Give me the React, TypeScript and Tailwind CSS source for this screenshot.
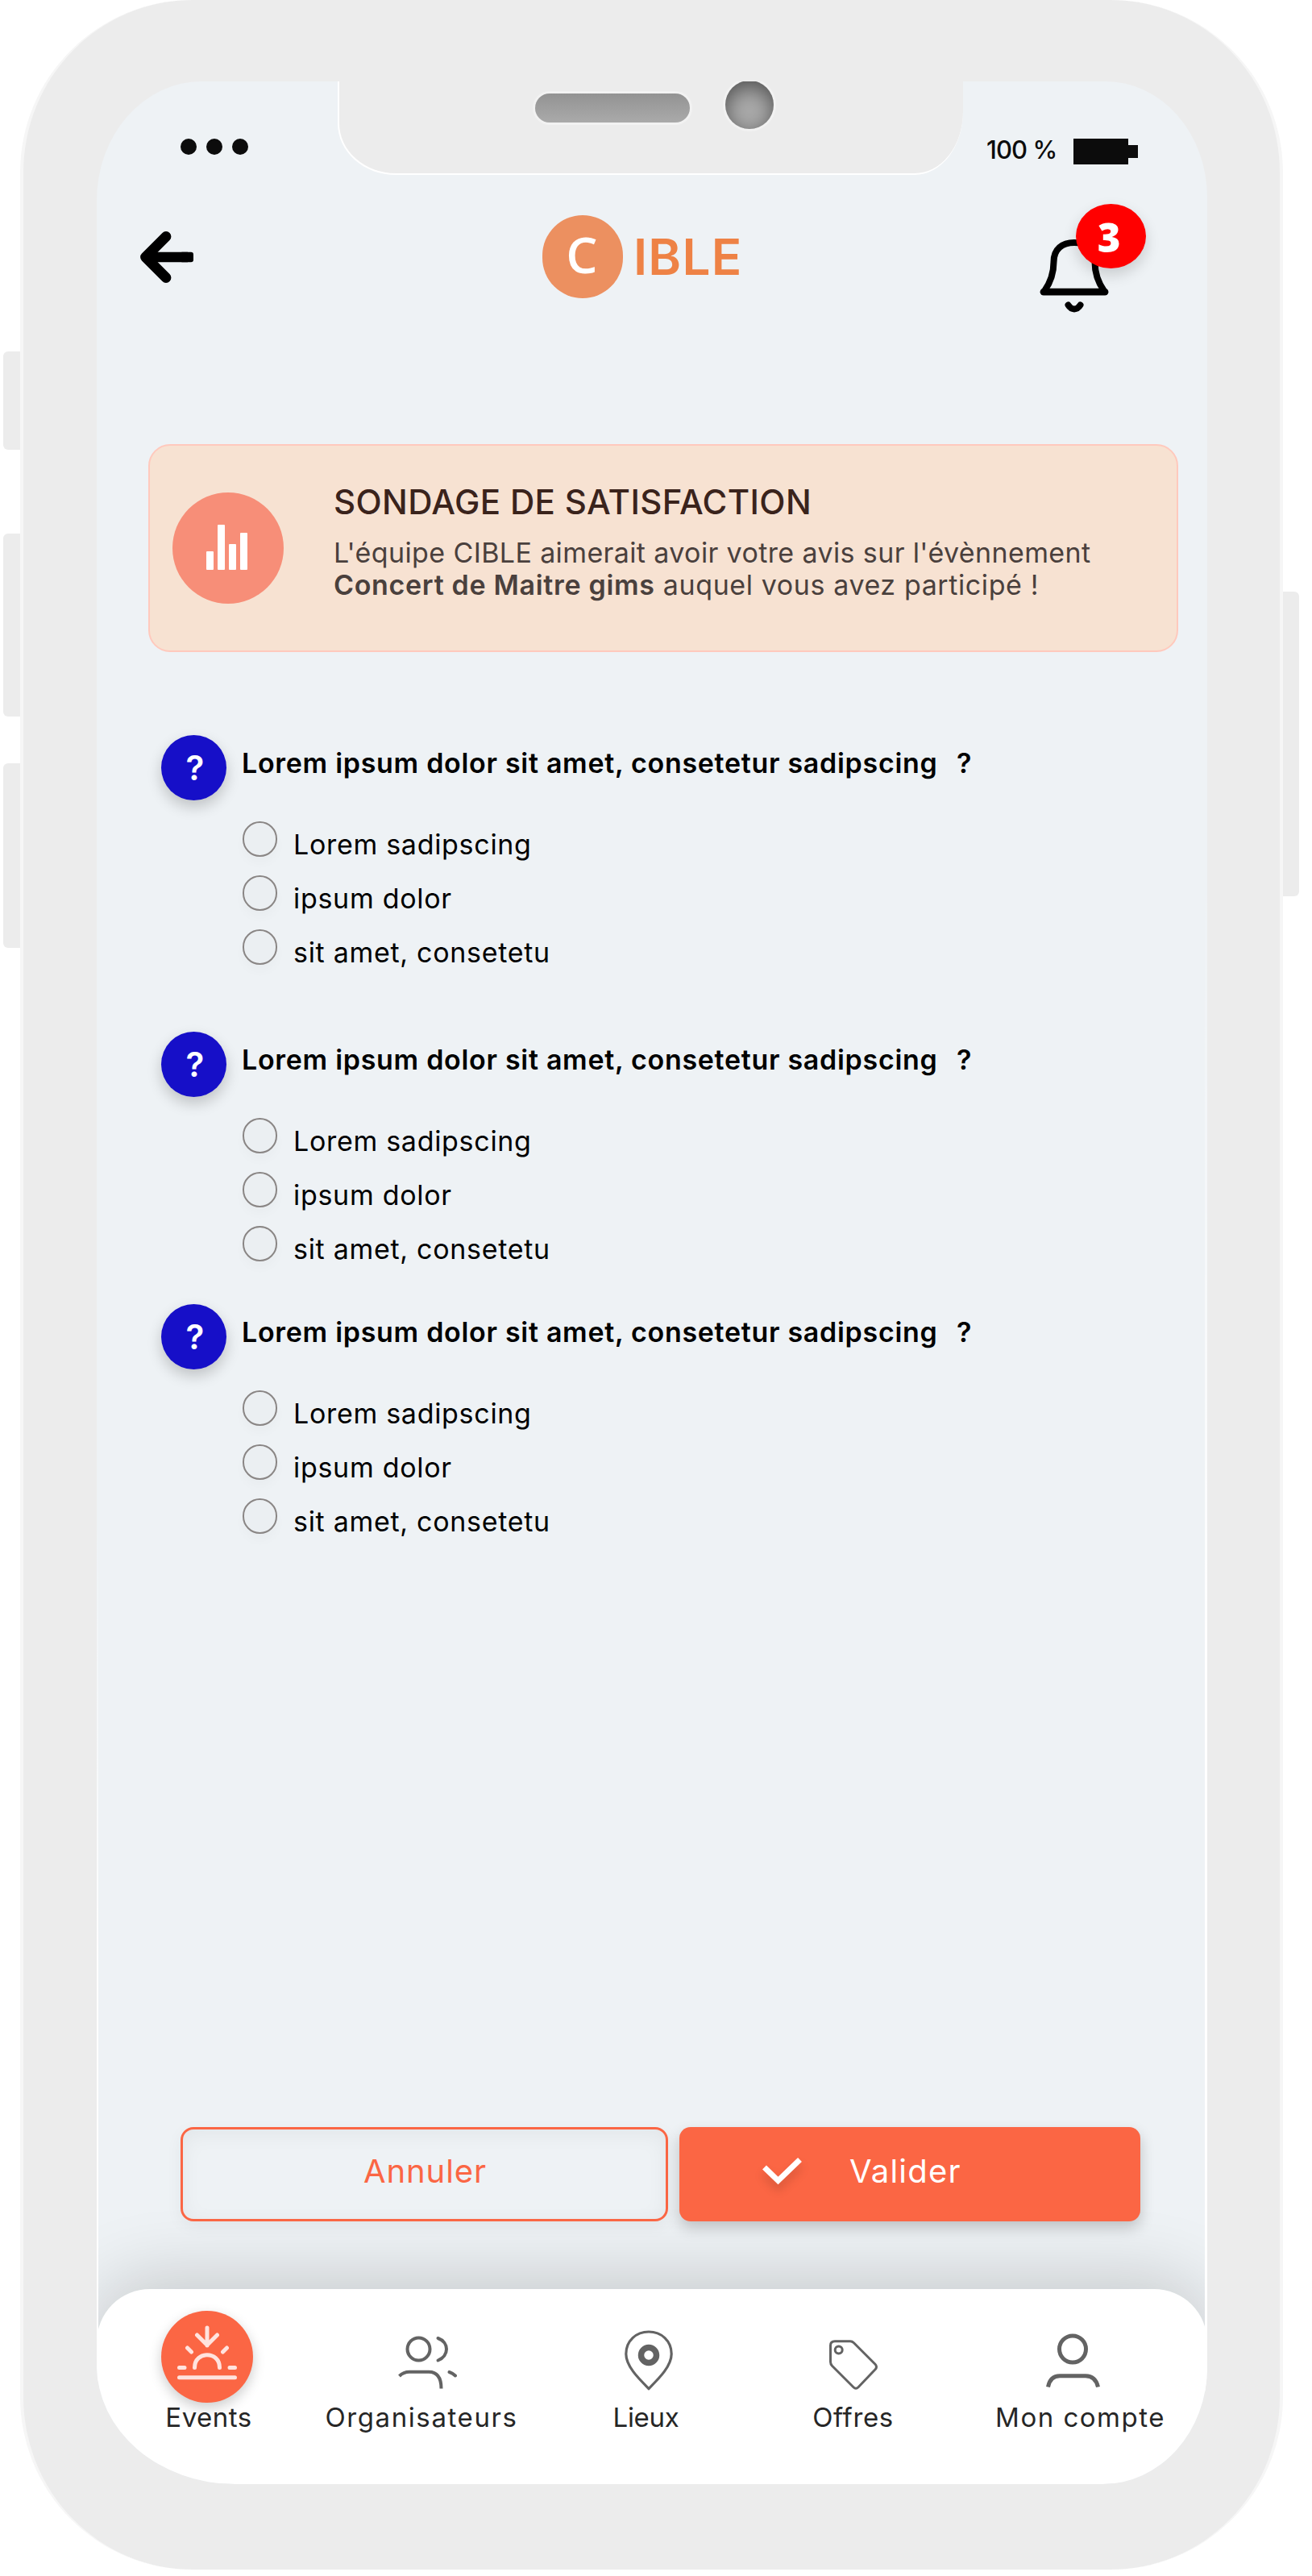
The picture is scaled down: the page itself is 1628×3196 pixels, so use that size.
import type { ReactNode } from "react";

function BackArrow() {
  return (
    <svg viewBox="0 0 68 64" className="mt-[46px] h-[64px] w-[68px] shrink-0" fill="none" stroke="#000" strokeWidth="12.500">
      <path d="M33 6.500 7.500 32 33 57.500" strokeLinecap="round" strokeLinejoin="round" strokeWidth="12.800" />
      <path d="M14 32h46" />
      <rect x="50" y="25.800" width="17" height="12.400" rx="3" fill="#000" stroke="none" />
    </svg>
  );
}

function BellIcon() {
  return (
    <svg viewBox="0 0 86 92" className="h-[92px] w-[86px]" fill="none" stroke="#000" strokeWidth="8">
      <path d="M6 64C13 54 17.500 42 17.500 28 17.500 12 28 4 43 4s25.500 8 25.500 24C68.500 42 73 54 80 64" />
      <path d="M5 65.200h76" strokeWidth="8.800" strokeLinecap="round" />
      <path d="M35.500 81.500c4 6.500 11 6.500 15 0" strokeWidth="8" strokeLinecap="round" />
    </svg>
  );
}

function EventsIcon() {
  return (
    <div className="mt-[27px] mr-[4px] flex size-[114px] shrink-0 items-center justify-center rounded-full bg-[#fb6644] shadow-[0_6px_16px_rgba(0,0,0,0.2)]">
      <svg viewBox="0 0 114 114" className="size-[114px]" fill="none" stroke="#ffe3de" strokeWidth="5" strokeLinecap="round" strokeLinejoin="round">
        <path d="M57 21v22M44.500 30 57 42.500 69.500 30" />
        <path d="M41.500 70.500C41.500 49.500 72.500 49.500 72.500 70.500" />
        <path d="M32.500 46l5 5M81.500 46l-5 5M22.500 70.500h6.500M85 70.500h6.500M22.500 82.800h69" />
      </svg>
    </div>
  );
}

function OrganisersIcon() {
  return (
    <svg viewBox="493 2897 74 68" className="mt-[57px] ml-[14px] h-[68px] w-[74px] shrink-0" fill="none" stroke="#636363" strokeWidth="4">
      <circle cx="519.500" cy="2914.500" r="14" />
      <path d="M543.500 2901C557.500 2906 557.500 2923 543.500 2928.500" strokeLinecap="round" />
      <path d="M495.500 2948C500 2943.500 504 2942.800 508 2942.800H532C541 2942.800 547.500 2948 547.500 2963.500" />
      <path d="M557.500 2943q4 1.200 7.500 4.500" strokeLinecap="round" />
    </svg>
  );
}

function PlaceIcon() {
  return (
    <svg viewBox="775 2895 60 75" className="mt-[51px] ml-[7px] h-[75px] w-[60px] shrink-0" fill="none" stroke="#636363" strokeWidth="3.200">
      <path d="M805 2967.500C793 2955.500 776.800 2940 776.800 2924.500 776.800 2908 789.500 2897 805 2897s28.200 11 28.200 27.500C833.200 2940 817 2955.500 805 2967.500Z" />
      <circle cx="805" cy="2926" r="9.500" strokeWidth="7.500" />
    </svg>
  );
}

function TagIcon() {
  return (
    <svg viewBox="1028 2906 62 64" className="mt-[62px] h-[64px] w-[62px] shrink-0" fill="none" stroke="#636363" strokeWidth="3" strokeLinejoin="round">
      <path d="M1036 2908.800h19q2.500 0 4.500 2l26.500 26.500q3 3 0 6.500l-21 22q-3 3-6 0l-26.500-26.500q-2-2-2-5V2914q0-5.200 5.500-5.200Z" />
      <circle cx="1040.700" cy="2919.500" r="4.500" />
    </svg>
  );
}

function AccountIcon() {
  return (
    <svg viewBox="1297 2898 69 68" className="mt-[55px] mr-[19px] h-[68px] w-[69px] shrink-0" fill="none" stroke="#636363" strokeWidth="5">
      <circle cx="1331" cy="2917.500" r="16.500" />
      <path d="M1300.500 2964.500C1302.500 2953.500 1309 2950.800 1315 2950.800H1347C1353.500 2950.800 1360 2953.500 1362.500 2964.500" />
    </svg>
  );
}

function StatusBar() {
  return (
    <div className="flex h-[140px] items-start justify-between pt-[71px] pr-[86px] pl-[104px]">
      <div className="flex gap-3">
        <span className="size-5 rounded-full bg-[#0c0c0c]" />
        <span className="size-5 rounded-full bg-[#0c0c0c]" />
        <span className="size-5 rounded-full bg-[#0c0c0c]" />
      </div>
      <div className="flex items-start">
        <span className="w-[108px] text-[31px] leading-[27px] font-medium tracking-[-0.900px] whitespace-nowrap text-[#0c0c0c]">100 %</span>
        <span className="h-8 w-[68px] bg-[#0c0c0c]" />
        <span className="mt-2 h-4 w-3 bg-[#0c0c0c]" />
      </div>
    </div>
  );
}

function Header() {
  return (
    <div className="flex h-[310px] items-start pl-[53px]">
      <BackArrow />
      <div className="mt-[26px] ml-[432px] flex w-[250px] shrink-0 items-center text-[62px] leading-none font-semibold">
        <span className="flex h-[103px] w-[100px] shrink-0 items-center justify-center rounded-full bg-[#ec9060] pr-[2px] pb-[7px] font-['Open_Sans',sans-serif] text-white">C</span>
        <span className="ml-[13px] pt-px tracking-[1.200px] text-[#ee8245]">IBLE</span>
      </div>
      <div className="relative mt-[56px] ml-[367px]">
        <BellIcon />
        <span className="absolute -top-[44px] left-[45px] flex h-[80px] w-[87px] items-center justify-center rounded-[50%] bg-[#ff0000] pt-[3px] pr-[5px] font-['Open_Sans',sans-serif] text-[49px] leading-none font-extrabold text-white shadow-[0_8px_18px_rgba(0,0,0,0.16)]">
          3
        </span>
      </div>
    </div>
  );
}

function SurveyCard() {
  return (
    <div className="ml-[64px] flex h-[258px] w-[1278px] shrink-0 items-start rounded-[27px] border-2 border-[#ffc9bd] bg-[#f7e2d2] pl-[28px]">
      <div className="mt-[58px] flex size-[138px] shrink-0 items-end justify-center gap-[4.500px] rounded-full bg-[#f78e78] pr-[3px] pb-[42px]">
        <span className="h-[23px] w-[9.500px] rounded-[1px] bg-white" />
        <span className="h-[56px] w-[9.500px] rounded-[1px] bg-white" />
        <span className="h-[32px] w-[9.500px] rounded-[1px] bg-white" />
        <span className="h-[46px] w-[9.500px] rounded-[1px] bg-white" />
      </div>
      <div className="pt-[45px] pl-[62px] whitespace-nowrap">
        <h1 className="text-[42px] leading-[50px] font-medium tracking-[0.36px] text-[#3a231c]">SONDAGE DE SATISFACTION</h1>
        <p className="mt-[18px] text-[34px] leading-10 tracking-[0.380px] text-[#4a403d]">
          L'équipe CIBLE aimerait avoir votre avis sur l'évènnement
          <br />
          <strong className="font-semibold tracking-[0.680px]">Concert de Maitre gims</strong>
          <span className="tracking-[0.600px]"> auquel vous avez participé !</span>
        </p>
      </div>
    </div>
  );
}

function Option({ children }: { children: ReactNode }) {
  return (
    <label className="flex h-[67px] items-start">
      <span className="h-[44px] w-[43px] shrink-0 rounded-full border-2 border-[#8a8685] bg-[#ebeff2] shadow-[0_8px_14px_rgba(0,0,0,0.025)]" />
      <span className="mt-[9px] ml-[20px] text-[34px] leading-10 tracking-[0.700px] whitespace-nowrap text-black">{children}</span>
    </label>
  );
}

function Question({ last = false }: { last?: boolean }) {
  return (
    <section className={last ? "flex h-[338px] items-start" : "flex h-[368px] items-start"}>
      <span className="flex size-[81px] shrink-0 items-center justify-center rounded-full bg-[#160fc8] pt-px pl-[3px] text-[42px] leading-none font-semibold text-white shadow-[0_8px_18px_rgba(0,0,0,0.2)]">
        ?
      </span>
      <div className="ml-[19px]">
        <h2 className="mt-[15px] flex text-[34px] leading-10 font-semibold tracking-[0.700px] whitespace-nowrap text-black">
          <span className="w-[887px]">Lorem ipsum dolor sit amet, consetetur sadipscing</span>
          <span>?</span>
        </h2>
        <div className="mt-[52px] pl-px">
          <Option>Lorem sadipscing</Option>
          <Option>ipsum dolor</Option>
          <Option>sit amet, consetetu</Option>
        </div>
      </div>
    </section>
  );
}

function Actions() {
  return (
    <div className="relative z-10 mt-auto mb-[84px] flex gap-[14px] pl-[104px] text-[40px]">
      <button className="h-[117px] w-[605px] rounded-[16px] border-[3px] border-[#fb6644] pb-[7px] pl-[2px] tracking-[0.900px] text-[#fb6644] shadow-[0_6px_20px_rgba(0,0,0,0.05),inset_0_6px_26px_rgba(0,0,0,0.05)]">
        Annuler
      </button>
      <button className="flex h-[117px] w-[572px] items-center rounded-[14px] bg-[#fb6644] pb-[7px] pl-[103px] text-white shadow-[0_8px_18px_rgba(0,0,0,0.2)]">
        <svg viewBox="0 0 50 34" className="h-[34px] w-[50px] drop-shadow-[0_8px_6px_rgba(0,0,0,0.16)]" fill="none" stroke="#fff" strokeWidth="7">
          <path d="M2.500 12 19.500 28.500 46.500 2.500" />
        </svg>
        <span className="ml-[58px] tracking-[1.200px]">Valider</span>
      </button>
    </div>
  );
}

function NavItem({ icon, children }: { icon: ReactNode; children: ReactNode }) {
  return (
    <a className="flex flex-col items-center text-[33px] leading-10 whitespace-nowrap text-[#262626]">
      <span className="flex h-[139px] items-start justify-center">{icon}</span>
      {children}
    </a>
  );
}

function BottomNav() {
  return (
    <nav className="grid h-[242px] shrink-0 grid-cols-[278px_250px_307px_207px_357px] rounded-t-[66px] bg-white shadow-[0_-10px_92px_rgba(0,0,0,0.18)]">
      <NavItem icon={<EventsIcon />}>
        <span className="tracking-[0.500px]">Events</span>
      </NavItem>
      <NavItem icon={<OrganisersIcon />}>
        <span className="tracking-[1.600px]">Organisateurs</span>
      </NavItem>
      <NavItem icon={<PlaceIcon />}>
        <span className="tracking-[-0.300px]">Lieux</span>
      </NavItem>
      <NavItem icon={<TagIcon />}>
        <span className="tracking-[0.600px]">Offres</span>
      </NavItem>
      <NavItem icon={<AccountIcon />}>
        <span className="tracking-[1.500px]">Mon compte</span>
      </NavItem>
    </nav>
  );
}

function Notch() {
  return (
    <div className="absolute top-0 left-[299px] h-[116px] w-[776px] rounded-br-[60px_78px] rounded-bl-[72px_64px] border-b-2 border-l-2 border-white bg-[#ececec]">
      <span className="absolute top-[15px] left-[243px] h-[36px] w-[192px] rounded-[18px] bg-linear-to-b from-[#939393] to-[#aaaaaa] shadow-[0_0_0_3px_#f2f2f2]" />
      <span className="absolute -top-px left-[479px] size-[60px] rounded-full bg-[#a9a9a9] shadow-[0_0_0_3px_#f2f2f2,inset_0_8px_24px_rgba(0,0,0,0.5)]" />
    </div>
  );
}

export default function App() {
  return (
    <div className="relative h-[3196px] w-[1628px] overflow-hidden bg-white font-[Inter,sans-serif]">
      <span className="absolute top-[436px] left-[4px] h-[122px] w-[40px] rounded-[6px] bg-[#ececec]" />
      <span className="absolute top-[662px] left-[4px] h-[227px] w-[40px] rounded-[6px] bg-[#ececec]" />
      <span className="absolute top-[947px] left-[4px] h-[229px] w-[40px] rounded-[6px] bg-[#ececec]" />
      <span className="absolute top-[734px] left-[1572px] h-[378px] w-[40px] rounded-[6px] bg-[#ececec]" />
      <div className="relative ml-[25px] h-[3188px] w-[1567px] rounded-[214px] border-x-[4px] border-[#f6f6f6] bg-[#ececec] pt-[101px] pl-[91px]">
        <div className="relative flex h-[2981px] w-[1378px] flex-col overflow-hidden rounded-tl-[130px_148px] rounded-tr-[126px_144px] rounded-br-[130px_145px] rounded-bl-[172px_148px] bg-[#eef2f5]">
          <StatusBar />
          <Header />
          <SurveyCard />
          <div className="flex flex-col pt-[103px] pl-[80px]">
            <Question />
            <Question last />
            <Question />
          </div>
          <Actions />
          <BottomNav />
          <Notch />
          <span className="absolute right-0 bottom-0 h-[2000px] w-[3px] bg-linear-to-b from-transparent to-white to-50%" />
          <span className="absolute bottom-0 left-0 h-[1200px] w-[2px] bg-linear-to-b from-transparent to-white to-50%" />
        </div>
      </div>
    </div>
  );
}
